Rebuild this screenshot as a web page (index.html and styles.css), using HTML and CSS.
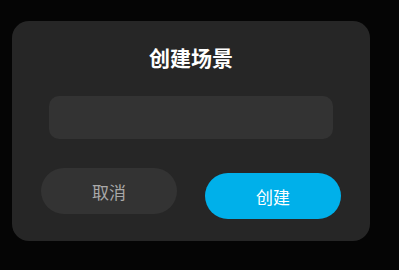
FILE: index.html
```html
<!DOCTYPE html>
<html lang="zh-CN">
<head>
    <meta charset="UTF-8">
    <meta name="viewport" content="width=device-width, initial-scale=1.0">
    <title>创建场景</title>
    <link rel="stylesheet" href="styles.css">
</head>
<body>
    <div class="dialog">
        <h1 class="title">创建场景</h1>
        <input class="name-input" type="text" id="scene-name">
        <div class="actions">
            <button class="btn btn-cancel">取消</button>
            <button class="btn btn-create">创建</button>
        </div>
    </div>
</body>
</html>
```

FILE: styles.css
```css
* {
    padding: 0;
    margin: 0;
    box-sizing: border-box;
}

body {
    font-family: "Noto Sans CJK SC", "Noto Sans", sans-serif;
    background-color: #050505;
}

.dialog {
    margin: 21px 0 0 12px;
    width: 358px;
    height: 220px;
    display: flex;
    flex-direction: column;
    align-items: center;
    padding-top: 22px;
    background-color: #262626;
    border-radius: 17px;
}

.title {
    font-size: 21px;
    line-height: 28px;
    font-weight: bold;
    color: #ffffff;
}

.name-input {
    margin-top: 25px;
    width: 284px;
    height: 43px;
    border: none;
    outline: none;
    border-radius: 10px;
    background-color: #333333;
    color: #ffffff;
    font-size: 16px;
    padding: 0 14px;
}

.actions {
    margin-top: 29px;
    display: flex;
    align-items: flex-start;
    gap: 28px;
}

.btn {
    width: 136px;
    height: 46px;
    border: none;
    border-radius: 23px;
    font-family: inherit;
    font-size: 17px;
}

.btn-cancel {
    background-color: #333333;
    color: #a9a9a9;
}

.btn-create {
    margin-top: 5px;
    background-color: #00b0ea;
    color: #ffffff;
}
```
